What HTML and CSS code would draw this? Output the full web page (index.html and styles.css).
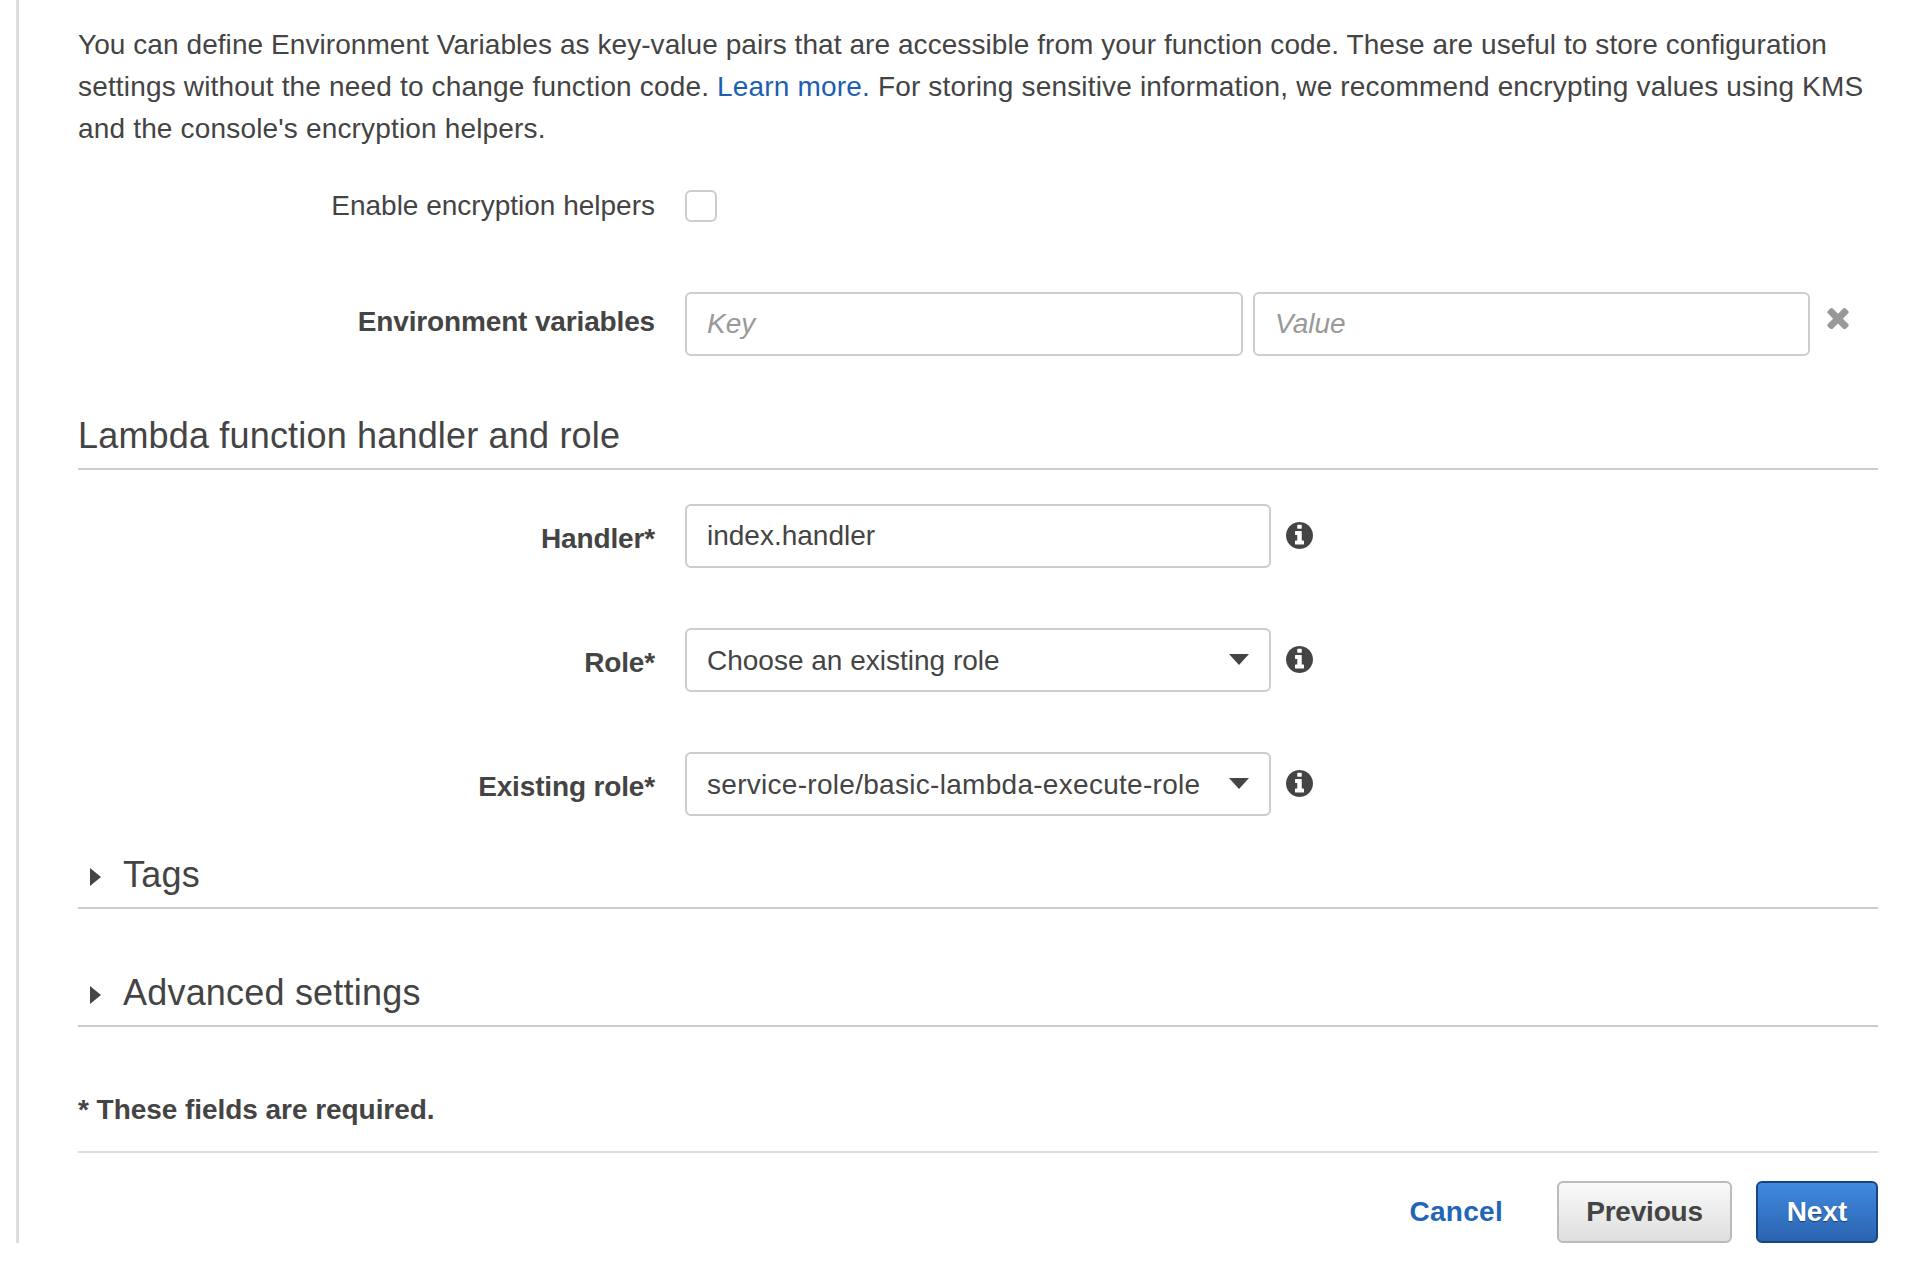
FILE: index.html
```html
<!DOCTYPE html>
<html lang="en">
<head>
    <meta charset="UTF-8">
    <title>Lambda - Configure function</title>
    <link rel="stylesheet" href="styles.css">
</head>
<body>
    <div class="panel">
        <p class="intro"><span class="intro-lead">You can define Environment Variables as key-value pairs that are accessible from your function code. These are useful to store configuration</span> settings without the need to change function code. <a href="#">Learn more.</a> For storing sensitive information, we recommend encrypting values using KMS and the console's encryption helpers.</p>

        <div class="form-row row-encrypt">
            <label class="field-label plain">Enable encryption helpers</label>
            <span class="checkbox"></span>
        </div>

        <div class="form-row row-env">
            <label class="field-label env-label">Environment variables</label>
            <div class="env-fields">
                <input class="text-input env-input" placeholder="Key">
                <input class="text-input env-input" placeholder="Value">
                <svg class="remove-icon" viewBox="110 256 1188 1280"><path d="M1298 1322q0 40-28 68l-136 136q-28 28-68 28t-68-28l-294-294-294 294q-28 28-68 28t-68-28l-136-136q-28-28-28-68t28-68l294-294-294-294q-28-28-28-68t28-68l136-136q28-28 68-28t68 28l294 294 294-294q28-28 68-28t68 28l136 136q28 28 28 68t-28 68l-294 294 294 294q28 28 28 68z"/></svg>
            </div>
        </div>

        <h2 class="section-title">Lambda function handler and role</h2>

        <div class="form-row row-field row-first">
            <label class="field-label">Handler*</label>
            <input class="text-input wide-input" value="index.handler">
            <svg class="info-icon" viewBox="0 128 1536 1536"><path d="M1024 1376v-160q0-14-9-23t-23-9h-96v-512q0-14-9-23t-23-9h-320q-14 0-23 9t-9 23v160q0 14 9 23t23 9h96v320h-96q-14 0-23 9t-9 23v160q0 14 9 23t23 9h448q14 0 23-9t9-23zm-128-896v-160q0-14-9-23t-23-9h-192q-14 0-23 9t-9 23v160q0 14 9 23t23 9h192q14 0 23-9t9-23zm640 416q0 209-103 385.5t-279.5 279.5-385.5 103-385.5-103-279.5-279.5-103-385.5 103-385.5 279.5-279.5 385.5-103 385.5 103 279.5 279.5 103 385.5z"/></svg>
        </div>

        <div class="form-row row-field">
            <label class="field-label">Role*</label>
            <div class="select-wrap">
                <select class="text-input wide-input"><option>Choose an existing role</option></select>
            </div>
            <svg class="info-icon" viewBox="0 128 1536 1536"><path d="M1024 1376v-160q0-14-9-23t-23-9h-96v-512q0-14-9-23t-23-9h-320q-14 0-23 9t-9 23v160q0 14 9 23t23 9h96v320h-96q-14 0-23 9t-9 23v160q0 14 9 23t23 9h448q14 0 23-9t9-23zm-128-896v-160q0-14-9-23t-23-9h-192q-14 0-23 9t-9 23v160q0 14 9 23t23 9h192q14 0 23-9t9-23zm640 416q0 209-103 385.5t-279.5 279.5-385.5 103-385.5-103-279.5-279.5-103-385.5 103-385.5 279.5-279.5 385.5-103 385.5 103 279.5 279.5 103 385.5z"/></svg>
        </div>

        <div class="form-row row-field">
            <label class="field-label">Existing role*</label>
            <div class="select-wrap">
                <select class="text-input wide-input role-select"><option>service-role/basic-lambda-execute-role</option></select>
            </div>
            <svg class="info-icon" viewBox="0 128 1536 1536"><path d="M1024 1376v-160q0-14-9-23t-23-9h-96v-512q0-14-9-23t-23-9h-320q-14 0-23 9t-9 23v160q0 14 9 23t23 9h96v320h-96q-14 0-23 9t-9 23v160q0 14 9 23t23 9h448q14 0 23-9t9-23zm-128-896v-160q0-14-9-23t-23-9h-192q-14 0-23 9t-9 23v160q0 14 9 23t23 9h192q14 0 23-9t9-23zm640 416q0 209-103 385.5t-279.5 279.5-385.5 103-385.5-103-279.5-279.5-103-385.5 103-385.5 279.5-279.5 385.5-103 385.5 103 279.5 279.5 103 385.5z"/></svg>
        </div>

        <div class="collapse-title tags-title"><span class="arrow"></span>Tags</div>
        <div class="collapse-title advanced-title"><span class="arrow"></span>Advanced settings</div>

        <p class="required-note">* These fields are required.</p>

        <div class="actions">
            <a href="#" class="cancel-link">Cancel</a>
            <button class="btn btn-default">Previous</button>
            <button class="btn btn-primary">Next</button>
        </div>
    </div>
</body>
</html>
```

FILE: styles.css
```css
/* base */
body {
    margin: 0;
    background-color: #fff;
    color: #444;
    font-family: "Liberation Sans", Arial, sans-serif;
    font-size: 28px;
    line-height: 42px;
}

a {
    color: #1b5fb3;
    text-decoration: none;
}

.panel {
    width: 1862px;
    height: 1243px;
    box-sizing: border-box;
    margin-left: 16px;
    padding: 24px 0 0 59px;
    border-left: 3px solid #ddd;
}

.intro {
    margin: 0;
    letter-spacing: 0.17px;
}

.intro-lead {
    letter-spacing: 0.067px;
}

/* form rows */
.form-row {
    display: flex;
    align-items: center;
}

.row-encrypt {
    margin-top: 35px;
}

.row-env {
    margin-top: 65px;
}

.row-field {
    margin-top: 60px;
}

.row-first {
    margin-top: 34px;
}

.field-label {
    width: 577px;
    margin-right: 30px;
    flex-shrink: 0;
    text-align: right;
    font-weight: bold;
    letter-spacing: -0.15px;
}

.row-field .field-label {
    margin-top: 5px;
}

.field-label.plain {
    font-weight: normal;
    letter-spacing: 0;
}

.env-label {
    margin-top: -4px;
}

.checkbox {
    width: 32px;
    height: 32px;
    box-sizing: border-box;
    border: 2px solid #ccc;
    border-radius: 6px;
}

.text-input {
    height: 64px;
    box-sizing: border-box;
    padding: 0 20px;
    border: 2px solid #ccc;
    border-radius: 6px;
    background-color: #fff;
    color: #444;
    font-family: "Liberation Sans", Arial, sans-serif;
    font-size: 28px;
    outline: none;
}

.text-input::placeholder {
    color: #999;
    font-style: italic;
}

.env-fields {
    display: flex;
    align-items: flex-start;
}

.env-input {
    width: 558px;
    margin-right: 10px;
}

.env-input + .env-input {
    width: 557px;
    margin-right: 0;
}

.remove-icon {
    width: 22px;
    height: 23px;
    margin: 14px 0 0 17px;
    fill: #999;
}

.wide-input {
    width: 586px;
}

.role-select {
    letter-spacing: 0.29px;
}

.info-icon {
    width: 27px;
    height: 27px;
    margin: -2px 0 0 15px;
    fill: #444;
}

/* select with drawn caret */
.select-wrap {
    position: relative;
    display: flex;
}

.select-wrap select {
    appearance: none;
}

.select-wrap::after {
    content: '';
    position: absolute;
    right: 22px;
    top: 26px;
    border-left: 10px solid transparent;
    border-right: 10px solid transparent;
    border-top: 11px solid #444;
}

/* section headers */
.section-title {
    width: 1800px;
    margin: 56px 0 0;
    padding-bottom: 8px;
    border-bottom: 2px solid #ccc;
    font-size: 36px;
    font-weight: normal;
    line-height: 48px;
    letter-spacing: 0.18px;
}

.collapse-title {
    display: flex;
    align-items: center;
    width: 1800px;
    padding-bottom: 8px;
    border-bottom: 2px solid #ccc;
    font-size: 36px;
    line-height: 48px;
    letter-spacing: 0.2px;
}

.tags-title {
    margin-top: 35px;
}

.advanced-title {
    margin-top: 60px;
}

.arrow {
    width: 0;
    height: 0;
    margin: 4px 22px 0 12px;
    border-top: 9px solid transparent;
    border-bottom: 9px solid transparent;
    border-left: 11px solid #444;
}

.required-note {
    width: 1800px;
    margin: 62px 0 0;
    padding-bottom: 20px;
    border-bottom: 2px solid #ddd;
    font-weight: bold;
    letter-spacing: -0.05px;
}

/* footer buttons */
.actions {
    display: flex;
    justify-content: flex-end;
    align-items: center;
    width: 1800px;
    margin-top: 28px;
}

.cancel-link {
    margin-right: 54px;
    font-weight: bold;
    color: #1f66b8;
    letter-spacing: 0.3px;
}

.btn {
    height: 62px;
    box-sizing: border-box;
    border-radius: 6px;
    font-family: "Liberation Sans", Arial, sans-serif;
    font-size: 28px;
    font-weight: bold;
}

.btn-default {
    width: 175px;
    margin-right: 24px;
    border: 2px solid #bbb;
    background: linear-gradient(#fafafa, #dedede);
    color: #444;
    letter-spacing: -0.2px;
}

.btn-primary {
    width: 122px;
    border: 2px solid #17457f;
    background: linear-gradient(#418ae0, #2a64b0);
    color: #fff;
    text-shadow: 0 1px 1px #1c3f70;
}
```
